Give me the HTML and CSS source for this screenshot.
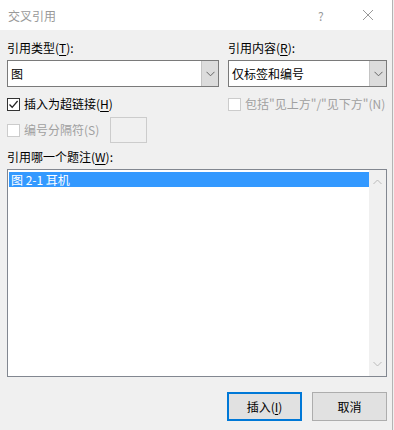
FILE: index.html
```html
<!DOCTYPE html>
<html lang="zh-CN">
<head>
    <meta charset="UTF-8">
    <title>交叉引用</title>
    <link rel="stylesheet" href="styles.css">
</head>
<body>
    <div class="dialog">
        <div class="titlebar">
            <span class="title">交叉引用</span>
            <span class="help">?</span>
            <span class="close">
                <svg width="12" height="12" viewBox="0 0 12 12"><path d="M1 1L11 11M11 1L1 11" stroke="#999" stroke-width="1" fill="none"/></svg>
            </span>
        </div>

        <div class="content">
            <div class="cols">
                <div class="col col-left">
                    <div class="label">引用类型(<u>T</u>):</div>
                    <div class="combo">
                        <span class="combo-text">图</span>
                        <span class="combo-btn">
                            <svg width="9" height="6" viewBox="0 0 9 6"><path d="M0.5 0.8L4.5 4.8L8.5 0.8" stroke="#666" stroke-width="1" fill="none"/></svg>
                        </span>
                    </div>
                    <label class="check check-first">
                        <span class="box checked">
                            <svg width="11" height="11" viewBox="0 0 11 11"><path d="M1.5 5.5L4.2 8.3L9.6 2" stroke="#222" stroke-width="1.3" fill="none"/></svg>
                        </span>
                        <span>插入为超链接(<u>H</u>)</span>
                    </label>
                    <div class="sep-row">
                        <label class="check disabled">
                            <span class="box"></span>
                            <span>编号分隔符(S)</span>
                        </label>
                        <span class="sep-input"></span>
                    </div>
                </div>
                <div class="col col-right">
                    <div class="label">引用内容(<u>R</u>):</div>
                    <div class="combo">
                        <span class="combo-text">仅标签和编号</span>
                        <span class="combo-btn">
                            <svg width="9" height="6" viewBox="0 0 9 6"><path d="M0.5 0.8L4.5 4.8L8.5 0.8" stroke="#666" stroke-width="1" fill="none"/></svg>
                        </span>
                    </div>
                    <label class="check check-first disabled">
                        <span class="box"></span>
                        <span class="nowrap">包括"见上方"/"见下方"(N)</span>
                    </label>
                </div>
            </div>

            <div class="label list-label">引用哪一个题注(<u>W</u>):</div>
            <div class="listbox">
                <div class="items">
                    <div class="item selected">图 2-1 耳机</div>
                </div>
                <div class="scrollbar">
                    <svg width="9" height="6" viewBox="0 0 9 6"><path d="M0.5 5L4.5 1L8.5 5" stroke="#bbb" stroke-width="1" fill="none"/></svg>
                    <svg width="9" height="6" viewBox="0 0 9 6"><path d="M0.5 1L4.5 5L8.5 1" stroke="#bbb" stroke-width="1" fill="none"/></svg>
                </div>
            </div>

            <div class="buttons">
                <button class="btn btn-default">插入(<u>I</u>)</button>
                <button class="btn">取消</button>
            </div>
        </div>
    </div>
</body>
</html>
```

FILE: styles.css
```css
body {
    margin: 0;
    padding: 0;
    background-color: #f0f0f0;
    font-family: "Noto Sans CJK SC", "Noto Sans", sans-serif;
    font-size: 12px;
    color: #000;
}
.dialog {
    width: 392px;
    height: 430px;
    border-right: 1px solid #b4b4b4;
    background-color: #f0f0f0;
}
.titlebar {
    height: 30px;
    background-color: #fff;
    display: flex;
    align-items: center;
}
.title {
    padding-left: 8px;
    color: #999;
    flex: 1;
}
.help {
    color: #999;
    width: 14px;
    margin-right: 30px;
}
.close {
    display: flex;
    margin-right: 18px;
}
.content {
    padding: 10px 0 0 7px;
}
.cols {
    display: flex;
    gap: 9px;
}
.col-left {
    width: 212px;
}
.col-right {
    width: 159px;
}
.label {
    line-height: 16px;
    height: 16px;
}
u {
    text-decoration: underline;
    text-underline-offset: 2px;
}
.combo {
    margin-top: 4px;
    height: 25px;
    border: 1px solid #7a7a7a;
    background-color: #fff;
    display: flex;
    align-items: stretch;
}
.combo-text {
    flex: 1;
    padding-left: 3px;
    line-height: 25px;
}
.combo-btn {
    width: 16px;
    background-color: #dcdcdc;
    border-left: 1px solid #c4c4c4;
    display: flex;
    align-items: center;
    justify-content: center;
}
.check {
    display: flex;
    align-items: center;
    gap: 4px;
    line-height: 16px;
}
.nowrap {
    white-space: nowrap;
}
.check-first {
    margin-top: 9px;
}
.box {
    width: 11px;
    height: 11px;
    border: 1px solid #333;
    background-color: #fff;
    display: flex;
    align-items: center;
    justify-content: center;
    flex: none;
}
.disabled {
    color: #a0a0a0;
}
.disabled .box {
    border-color: #ccc;
}
.sep-row {
    display: flex;
    align-items: center;
    margin-top: 5px;
}
.sep-row .check {
    width: 103px;
}
.sep-input {
    width: 35px;
    height: 24px;
    border: 1px solid #ccc;
    background-color: #f0f0f0;
}
.list-label {
    margin-top: 6px;
}
.listbox {
    margin-top: 4px;
    width: 378px;
    height: 206px;
    border: 1px solid #828790;
    background-color: #fff;
    display: flex;
}
.items {
    flex: 1;
    padding: 2px 0 0 1px;
}
.item {
    height: 15px;
    line-height: 15px;
    padding-left: 2px;
}
.item.selected {
    background-color: #3399ff;
    color: #fff;
}
.scrollbar {
    width: 17px;
    background-color: #f0f0f0;
    display: flex;
    flex-direction: column;
    justify-content: space-between;
    align-items: center;
    padding: 9px 0 9px 0;
}
.buttons {
    display: flex;
    justify-content: flex-end;
    gap: 10px;
    margin-top: 15px;
    width: 380px;
}
.btn {
    width: 75px;
    height: 29px;
    font-family: inherit;
    font-size: 12px;
    color: #000;
    background-color: #e1e1e1;
    border: 1px solid #adadad;
    padding: 0;
}
.btn-default {
    border: 2px solid #0078d7;
}
```
